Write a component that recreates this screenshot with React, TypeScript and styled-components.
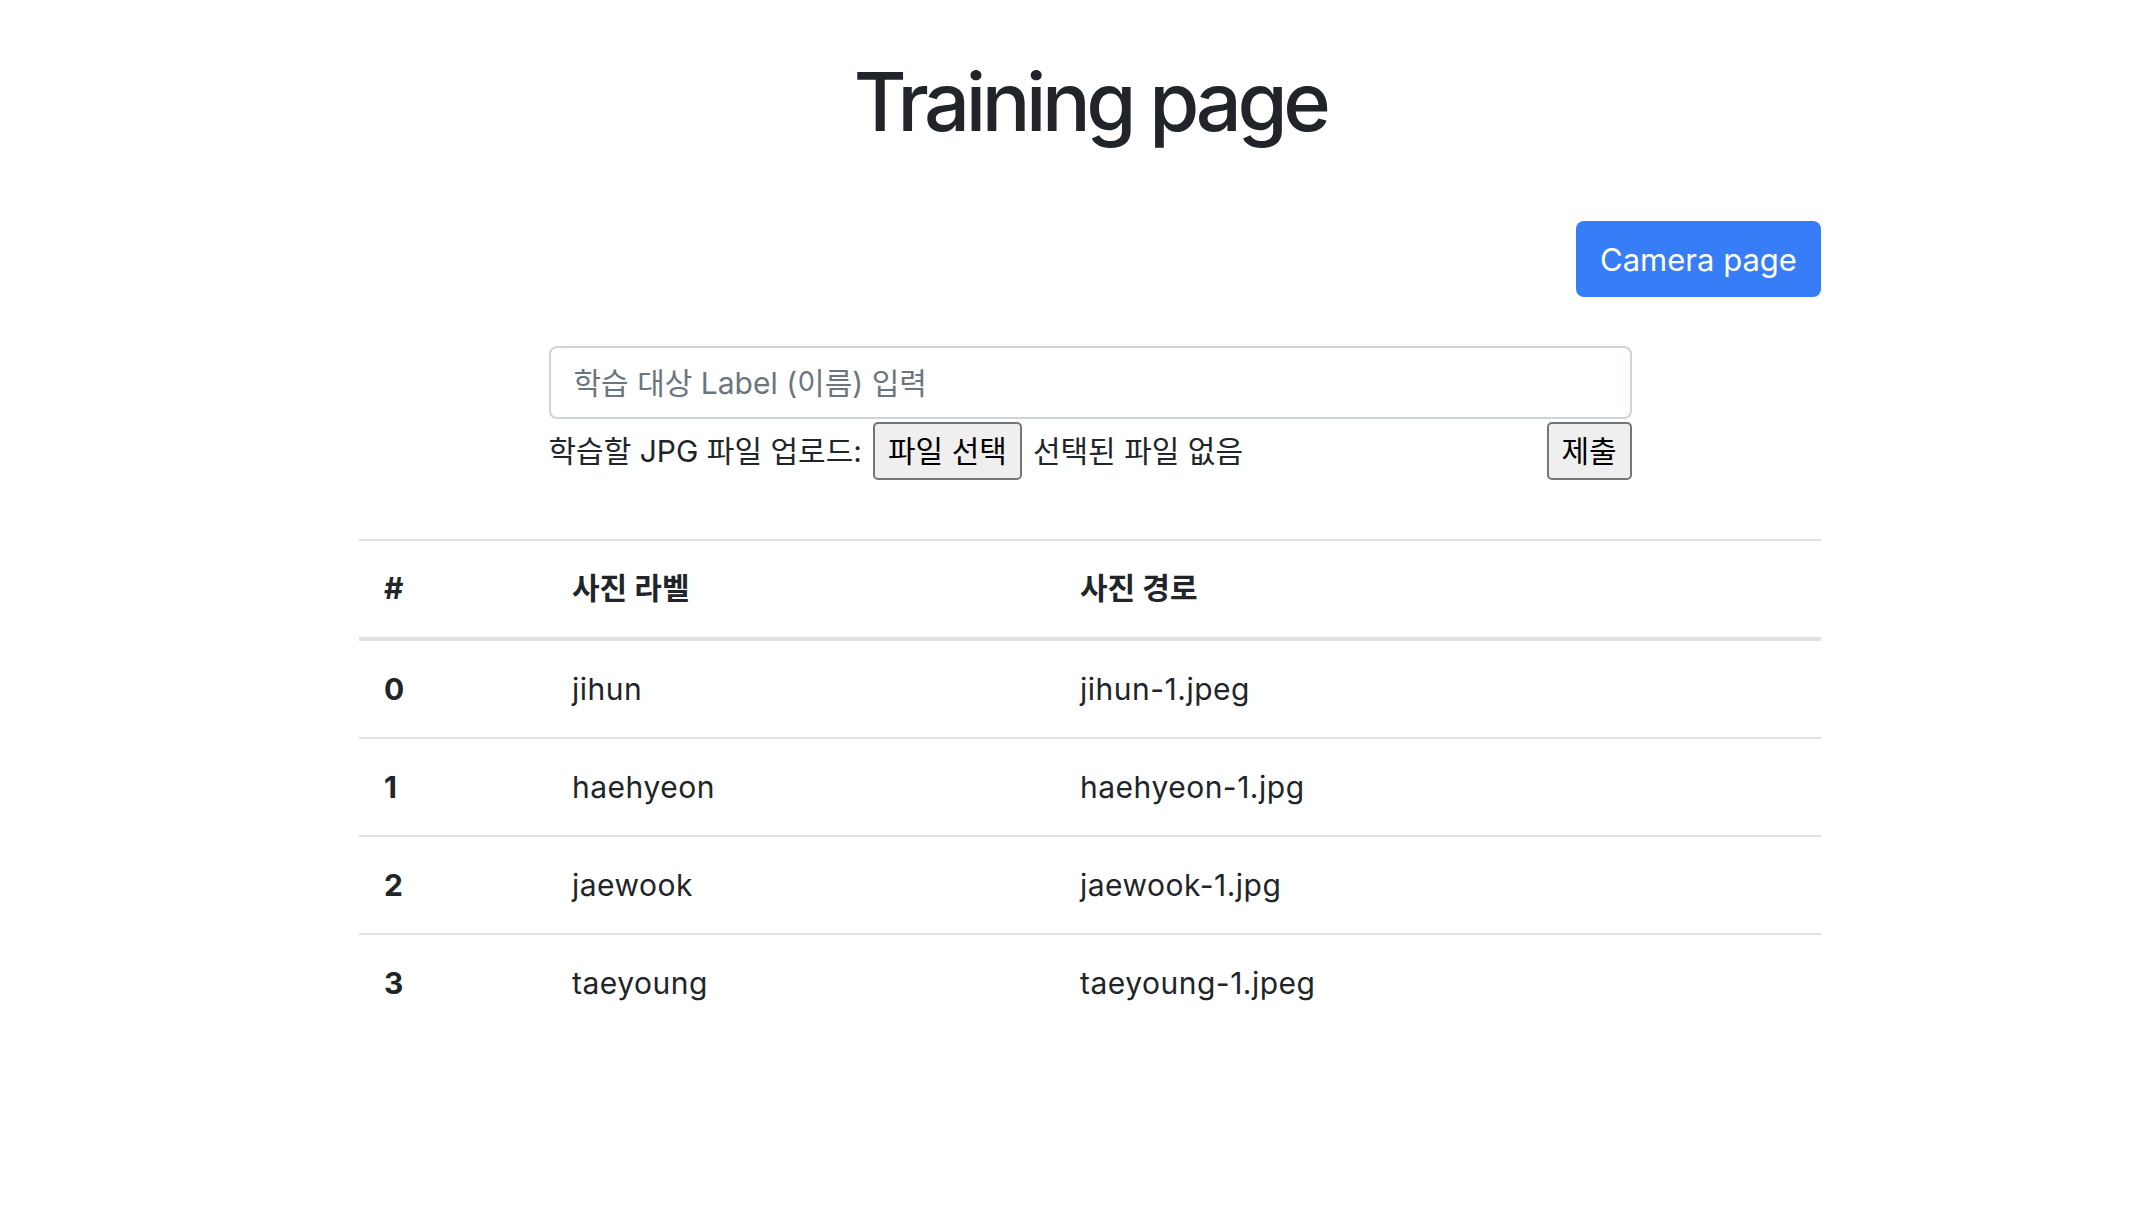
import React from "react";
import styled, { createGlobalStyle } from "styled-components";

const GlobalStyle = createGlobalStyle`
  html, body {
    margin: 0;
    padding: 0;
    background: #ffffff;
  }
  body {
    font-family: Inter, "Noto Sans CJK KR", "Noto Sans", sans-serif;
    color: #212529;
    font-size: 30px;
    line-height: 1.5;
  }
  * { box-sizing: border-box; }
`;

const Page = styled.div`
  padding-left: 30px;
`;

const Container = styled.main`
  width: 1462px;
  margin: 0 auto;
  padding-top: 53px;
  display: flex;
  flex-direction: column;
`;

const Title = styled.h1`
  margin: 0;
  text-align: center;
  font-size: 81px;
  line-height: 98px;
  font-weight: 500;
  letter-spacing: -4.4px;
  color: #212529;
`;

const TopBar = styled.div`
  display: flex;
  justify-content: flex-end;
  margin-top: 70px;
`;

const PrimaryButton = styled.button`
  width: 245px;
  height: 76px;
  border: none;
  border-radius: 8px;
  background: #377df7;
  color: #ffffff;
  font-family: inherit;
  font-size: 31px;
  font-weight: 400;
  padding: 0;
  white-space: nowrap;
  cursor: pointer;
`;

const Form = styled.form`
  width: 1083px;
  margin: 49px auto 0;
  display: flex;
  flex-direction: column;
  gap: 3px;
`;

const TextInput = styled.input`
  width: 100%;
  height: 73px;
  border: 2px solid #ced4da;
  border-radius: 8px;
  padding: 0 23px;
  font-family: inherit;
  font-size: 30px;
  color: #212529;
  outline: none;
  &::placeholder {
    color: #6c757d;
  }
`;

const FileRow = styled.div`
  display: flex;
  align-items: center;
  justify-content: space-between;
  height: 58px;
`;

const FileGroup = styled.div`
  display: flex;
  align-items: center;
  gap: 11px;
`;

const FileLabel = styled.span`
  font-size: 30px;
  line-height: 1;
`;

const NativeButton = styled.button<{ $w: number }>`
  width: ${(p) => p.$w}px;
  height: 58px;
  padding: 0;
  border: 2px solid #767676;
  border-radius: 5px;
  background: #efefef;
  color: #000000;
  font-family: inherit;
  font-size: 30px;
  line-height: 1;
  white-space: nowrap;
  cursor: pointer;
`;

const Table = styled.table`
  width: 100%;
  margin-top: 59px;
  border-collapse: collapse;
  border-top: 2px solid #dee2e6;
`;

const HeadCell = styled.th<{ $w?: number }>`
  text-align: left;
  font-weight: 700;
  padding: 26px 25px 27px;
  line-height: 43px;
  border-bottom: 4px solid #dee2e6;
  width: ${(p) => (p.$w ? `${p.$w}px` : "auto")};
`;

const Row = styled.tr`
  border-bottom: 2px solid #dee2e6;
  &:last-child {
    border-bottom: none;
  }
`;

const RowHead = styled.th`
  text-align: left;
  font-weight: 700;
  padding: 26px 25px;
  line-height: 44px;
`;

const Cell = styled.td`
  padding: 26px 25px;
  line-height: 44px;
  letter-spacing: 0.5px;
`;

const rows = [
  { label: "jihun", path: "jihun-1.jpeg" },
  { label: "haehyeon", path: "haehyeon-1.jpg" },
  { label: "jaewook", path: "jaewook-1.jpg" },
  { label: "taeyoung", path: "taeyoung-1.jpeg" },
];

export default function App() {
  return (
    <Page>
      <GlobalStyle />
      <Container>
        <Title>Training page</Title>
        <TopBar>
          <PrimaryButton type="button">Camera page</PrimaryButton>
        </TopBar>
        <Form onSubmit={(e) => e.preventDefault()}>
          <TextInput type="text" placeholder="학습 대상 Label (이름) 입력" />
          <FileRow>
            <FileGroup>
              <FileLabel>학습할 JPG 파일 업로드:</FileLabel>
              <NativeButton type="button" $w={149}>
                파일 선택
              </NativeButton>
              <FileLabel>선택된 파일 없음</FileLabel>
            </FileGroup>
            <NativeButton type="submit" $w={85}>
              제출
            </NativeButton>
          </FileRow>
        </Form>
        <Table>
          <thead>
            <tr>
              <HeadCell $w={188}>#</HeadCell>
              <HeadCell $w={508}>사진 라벨</HeadCell>
              <HeadCell>사진 경로</HeadCell>
            </tr>
          </thead>
          <tbody>
            {rows.map((r, i) => (
              <Row key={r.label}>
                <RowHead>{i}</RowHead>
                <Cell>{r.label}</Cell>
                <Cell>{r.path}</Cell>
              </Row>
            ))}
          </tbody>
        </Table>
      </Container>
    </Page>
  );
}
